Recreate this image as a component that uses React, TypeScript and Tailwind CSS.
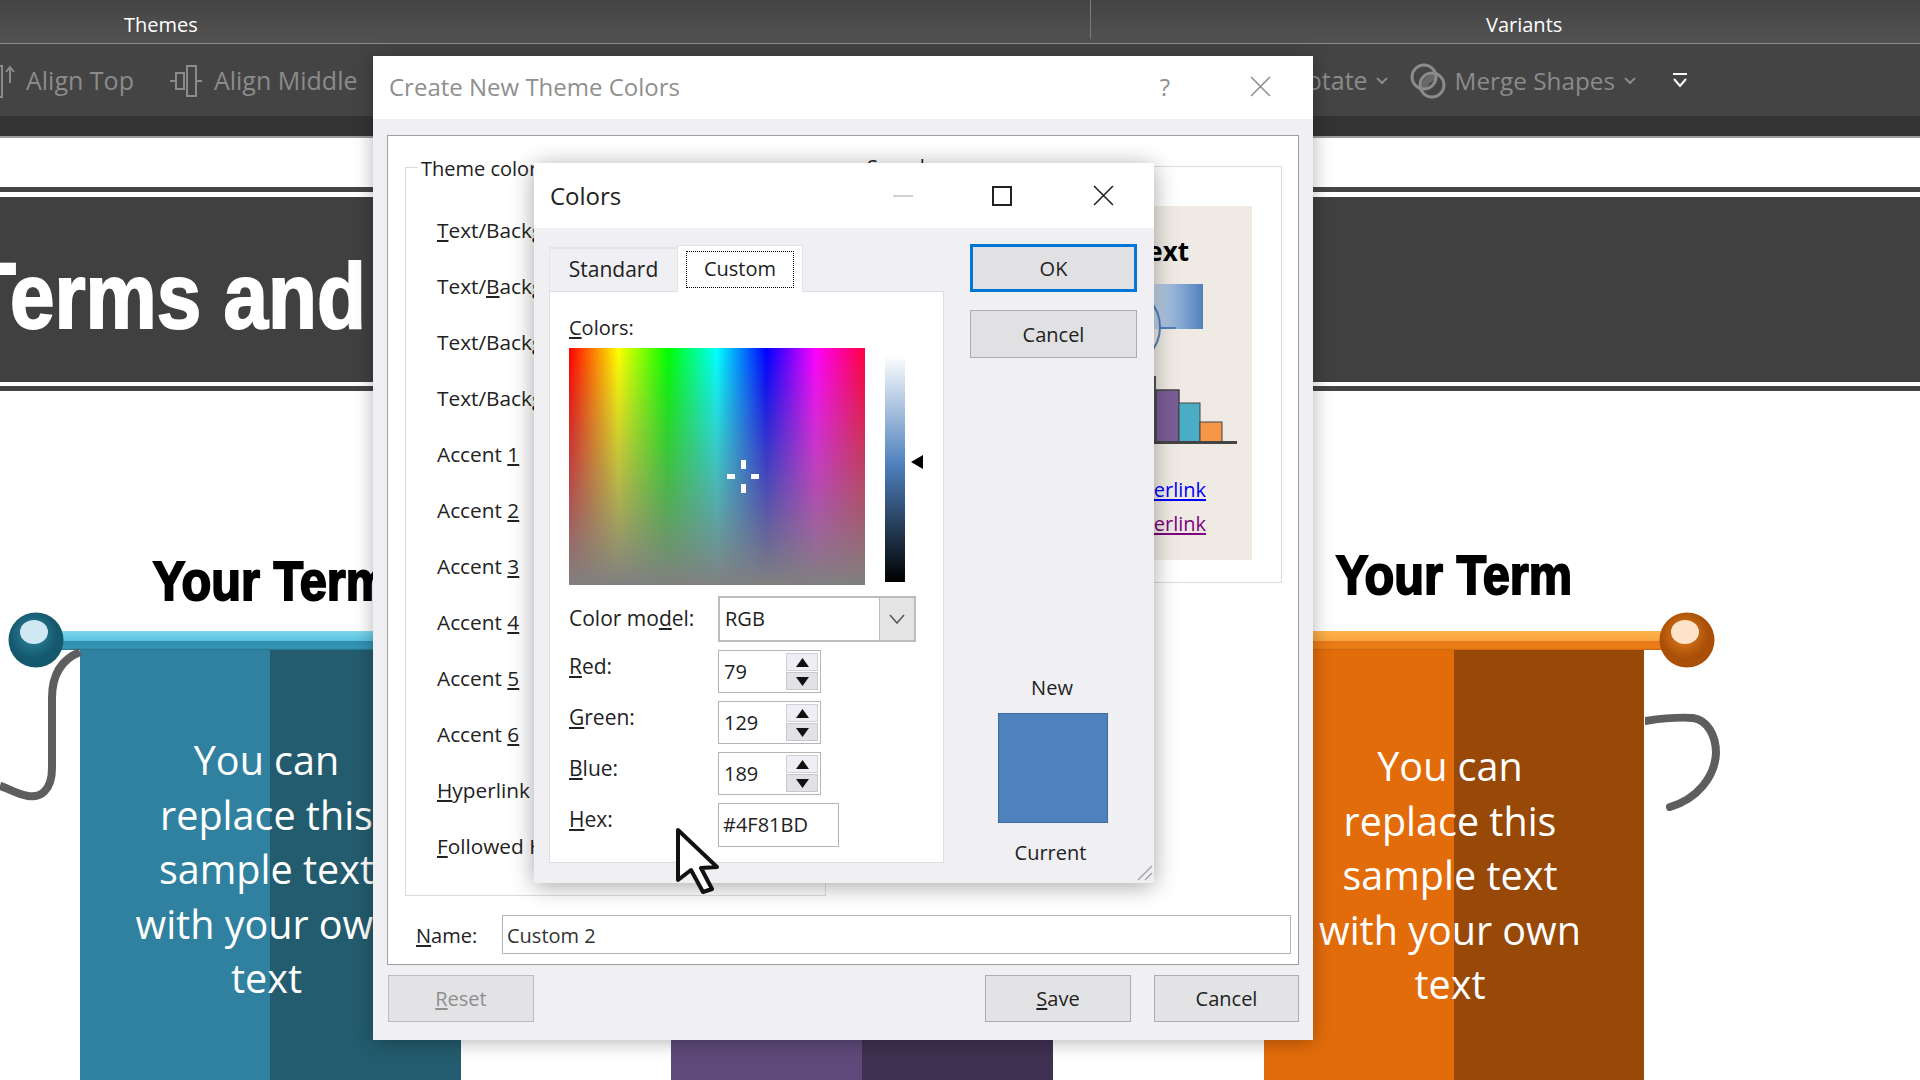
import type { ReactNode } from "react";

const themeRows: ReactNode[] = [
  <><u>T</u>ext/Background - Dark 1</>,
  <>Text/<u>B</u>ackground - Light 1</>,
  <>Text/Background - <u>D</u>ark 2</>,
  <>Text/Background - <u>L</u>ight 2</>,
  <>Accent <u>1</u></>,
  <>Accent <u>2</u></>,
  <>Accent <u>3</u></>,
  <>Accent <u>4</u></>,
  <>Accent <u>5</u></>,
  <>Accent <u>6</u></>,
  <><u>H</u>yperlink</>,
  <><u>F</u>ollowed Hyperlink</>,
];

const spinRows: { label: ReactNode; value: string }[] = [
  { label: <><u>R</u>ed:</>, value: "79" },
  { label: <><u>G</u>reen:</>, value: "129" },
  { label: <><u>B</u>lue:</>, value: "189" },
];

function CloseIcon({ className }: { className: string }) {
  return (
    <svg viewBox="0 0 20 20" className={className} fill="none" stroke="currentColor" strokeWidth="1.5">
      <path d="M1 1 19 19M19 1 1 19" />
    </svg>
  );
}

function Triangle({ up }: { up: boolean }) {
  return (
    <svg viewBox="0 0 13 9" className="h-[9px] w-[13px]" fill="#111">
      <path d={up ? "M6.5 0 13 9H0Z" : "M0 0H13L6.5 9Z"} />
    </svg>
  );
}

function Ball({ id, dark, mid, light }: { id: string; dark: string; mid: string; light: string }) {
  return (
    <svg viewBox="0 0 56 56" className="h-[56px] w-[56px]">
      <defs>
        <radialGradient id={id} cx="45%" cy="40%" r="62%">
          <stop offset="0%" stopColor={mid} />
          <stop offset="70%" stopColor={dark} />
          <stop offset="100%" stopColor={dark} />
        </radialGradient>
      </defs>
      <circle cx="28" cy="28" r="27.5" fill={`url(#${id})`} />
      <ellipse cx="26" cy="20" rx="14" ry="12" fill={light} />
    </svg>
  );
}

function Banner({
  heading,
  headingPad,
  textPad,
  fill,
  children,
  width,
}: {
  heading?: string;
  headingPad: string;
  textPad: string;
  fill: string;
  children?: ReactNode;
  width: string;
}) {
  return (
    <div className={`relative shrink-0 ${width}`}>
      <div className={`flex h-[240px] items-end justify-center ${headingPad}`}>
        {heading && (
          <h2 className="scale-x-[0.87] whitespace-nowrap font-['Liberation_Sans',sans-serif] text-[56px] leading-[56px] font-bold text-black [-webkit-text-stroke:2px_#000]">
            {heading}
          </h2>
        )}
      </div>
      <div className="h-[19px]" />
      <div className={`h-[431px] pr-[8px] text-center font-['Open_Sans',sans-serif] text-[39.5px] leading-[54.5px] whitespace-nowrap text-white ${fill} ${textPad}`}>
        {children}
      </div>
    </div>
  );
}

function Ribbon() {
  return (
    <div className="text-[#8b8b8b]">
      <div className="flex h-[44px] border-b border-[#8a8a8a] bg-[linear-gradient(to_bottom,#444444,#525252)] text-[20px] text-white">
        <div className="flex h-[39px] w-[1091px] items-center border-r border-[#7c7c7c] pt-[10px] pl-[124px]">Themes</div>
        <div className="flex h-[39px] items-center pt-[10px] pl-[395px]">Variants</div>
      </div>
      <div className="flex h-[72px] items-center bg-[#444444] pt-[2px] text-[25px]">
        <svg viewBox="0 0 20 36" className="ml-[-4px] h-[36px] w-[20px]" fill="none" stroke="#8b8b8b" strokeWidth="2">
          <path d="M0 3H6V34H0" />
          <path d="M14 20V4M10 9l4-5 4 5" />
        </svg>
        <span className="ml-[10px] whitespace-nowrap">Align Top</span>
        <svg viewBox="0 0 32 36" className="ml-[36px] h-[36px] w-[32px]" fill="none" stroke="#8b8b8b" strokeWidth="2">
          <path d="M0 18H6M26 18H32" />
          <rect x="6" y="10" width="8" height="16" />
          <rect x="17" y="3" width="9" height="30" />
        </svg>
        <span className="ml-[12px] whitespace-nowrap">Align Middle</span>
        <div className="ml-auto flex items-center pr-[232px]">
          <span className="whitespace-nowrap">Rotate</span>
          <svg viewBox="0 0 12 8" className="ml-[8px] h-[8px] w-[12px]" fill="none" stroke="#8b8b8b" strokeWidth="2">
            <path d="M1 1l5 5 5-5" />
          </svg>
          <svg viewBox="0 0 36 36" className="ml-[22px] h-[38px] w-[36px]" fill="none" stroke="#8b8b8b" strokeWidth="3">
            <circle cx="14" cy="14" r="12" />
            <circle cx="22" cy="22" r="12" />
            <path d="M14 26a12 12 0 0 1 12-12" strokeWidth="7" opacity="0.5" />
          </svg>
          <span className="ml-[9px] text-[24.3px] whitespace-nowrap">Merge Shapes</span>
          <svg viewBox="0 0 12 8" className="ml-[9px] h-[8px] w-[12px]" fill="none" stroke="#8b8b8b" strokeWidth="2">
            <path d="M1 1l5 5 5-5" />
          </svg>
          <svg viewBox="0 0 16 16" className="ml-[36px] h-[16px] w-[16px]" fill="none" stroke="#ffffff" strokeWidth="2">
            <path d="M1 1H15M2 6l6 7 6-7" />
          </svg>
        </div>
      </div>
    </div>
  );
}

function Slide() {
  return (
    <>
      <div className="box-content h-[20px] border-b-[2px] border-[#9c9c9c] bg-[#333333]" />
      <div className="h-[49px] bg-white" />
      <div className="h-[5px] bg-[#444444]" />
      <div className="h-[5px] bg-white" />
      <div className="flex h-[185px] items-center overflow-hidden bg-[#404040] pt-[12px]">
        <span className="ml-[-33px] origin-left scale-x-[0.87] whitespace-nowrap font-['Liberation_Sans',sans-serif] text-[92px] leading-none font-bold text-white [-webkit-text-stroke:2px_#fff]">
          Terms and
        </span>
      </div>
      <div className="h-[4px] bg-white" />
      <div className="h-[5px] bg-[#444444]" />
      <div className="relative flex h-[690px] overflow-hidden bg-white pl-[80px]">
        <Banner
          width="w-[381px]"
          heading="Your Term"
          headingPad="pb-[22px]"
          textPad="pt-[83px]"
          fill="bg-[linear-gradient(to_right,#30819f_50%,#235c6e_50%)]"
        >
          You can
          <br />
          replace this
          <br />
          sample text
          <br />
          with your own
          <br />
          text
        </Banner>
        <Banner
          width="ml-[210px] w-[382px]"
          headingPad=""
          textPad=""
          fill="bg-[linear-gradient(to_right,#5f497a_50%,#3f3151_50%)]"
        />
        <Banner
          width="ml-[211px] w-[380px]"
          heading="Your Term"
          headingPad="pb-[28px]"
          textPad="pt-[89px]"
          fill="bg-[linear-gradient(to_right,#e36c0a_50%,#984807_50%)]"
        >
          You can
          <br />
          replace this
          <br />
          sample text
          <br />
          with your own
          <br />
          text
        </Banner>

        {/* rods, balls and the loose wires hang over the banners */}
        <div className="absolute top-[240px] left-[60px] h-[19px] w-[401px] bg-[linear-gradient(to_bottom,#7fd6ee,#5cc3e0_50%,#2f8fb0_55%,#3495b4_90%,#27708a)]" />
        <div className="absolute top-[240px] left-[1264px] h-[19px] w-[420px] bg-[linear-gradient(to_bottom,#ffb24f,#f9a53e_50%,#e8791a_55%,#ec7d18_90%,#c9620d)]" />
        <div className="absolute top-[221px] left-[8px]">
          <Ball id="ball-teal" dark="#14586d" mid="#2f8ba6" light="#cfe8f3" />
        </div>
        <div className="absolute top-[221px] left-[1659px]">
          <Ball id="ball-orange" dark="#a94f08" mid="#e5801f" light="#fde3c9" />
        </div>
        <svg viewBox="0 0 90 160" className="absolute top-[255px] left-0 h-[160px] w-[90px]" fill="none" stroke="#5e5e60" strokeWidth="8">
          <path d="M80 6C60 14 52 30 52 52V122C52 145 40 152 28 150 16 148 8 142 0 140" />
        </svg>
        <svg viewBox="0 0 80 110" className="absolute top-[320px] left-[1645px] h-[110px] w-[80px]" fill="none" stroke="#5e5e60" strokeWidth="8" strokeLinecap="round">
          <path d="M0 10C20 7 36 6 48 7 62 9 71 24 71 42 70 66 52 88 25 96" />
        </svg>
      </div>
    </>
  );
}

function ThemeDialog() {
  return (
    <div className="absolute top-[56px] left-[373px] flex h-[984px] w-[940px] flex-col bg-[#f0eff4] text-[20px] text-[#222222] shadow-[0_2px_18px_rgba(0,0,0,0.3)]">
      <div className="flex h-[63px] items-center bg-white pb-[2px] pl-[16px] text-[#8f8f8f]">
        <span className="text-[24px]">Create New Theme Colors</span>
        <span className="ml-auto text-[24px]">?</span>
        <CloseIcon className="mr-[42px] ml-[80px] h-[21px] w-[21px]" />
      </div>
      <div className="mx-[14px] mt-[16px] flex h-[830px] flex-col border border-[#9e9e9e] bg-white">
        <div className="flex items-start pt-[31px] pl-[17px]">
          <div className="h-[729px] w-[421px] border border-[#dcdcdc]">
            <div className="-mt-[12px] ml-[12px] w-[160px] bg-white pl-[3px] leading-[26px] whitespace-nowrap">Theme colors:</div>
            <div className="mt-[21px] flex flex-col pl-[31px] text-[20.8px]">
              {themeRows.map((row, i) => (
                <div key={i} className="flex h-[56px] items-center whitespace-nowrap">
                  <span>{row}</span>
                </div>
              ))}
            </div>
          </div>
          <div className="-mt-px ml-[19px] h-[417px] w-[437px] border border-[#dcdcdc]">
            <div className="-mt-[13px] ml-[21px] w-fit bg-white leading-[26px]">Sample</div>
            <div className="mt-[26px] ml-[30px] flex h-[354px] w-[376px] flex-col items-end bg-[#efebe4]">
              <div className="mt-[29px] mr-[63px] h-[32px] text-[26px] leading-[32px] font-bold text-black">Text</div>
              <svg viewBox="1051 280 200 170" className="mt-[13px] h-[170px] w-[200px]">
                <defs>
                  <linearGradient id="sample-fill">
                    <stop offset="0%" stopColor="#ffffff" />
                    <stop offset="100%" stopColor="#4f81bd" />
                  </linearGradient>
                </defs>
                <rect x="1130" y="284" width="72" height="45" fill="url(#sample-fill)" />
                <circle cx="1120" cy="327" r="39" fill="none" stroke="#4f81bd" strokeWidth="2" />
                <path d="M1159 328H1175" stroke="#4f81bd" strokeWidth="2" />
                <path d="M1154 376V442" stroke="#555" strokeWidth="2" />
                <rect x="1155" y="390" width="23" height="52" fill="#7a5c97" stroke="#444" strokeWidth="1.5" />
                <rect x="1178" y="403" width="21" height="39" fill="#4bacc6" stroke="#444" strokeWidth="1" />
                <rect x="1199" y="422" width="22" height="20" fill="#f79646" stroke="#444" strokeWidth="1" />
                <path d="M1100 442.5H1236" stroke="#444" strokeWidth="3" />
              </svg>
              <div className="mt-[23px] mr-[46px] leading-[34px] text-[#0000ff] underline">Hyperlink</div>
              <div className="mr-[46px] leading-[34px] text-[#800080] underline">Followed Hyperlink</div>
            </div>
          </div>
        </div>
        <div className="mt-[19px] flex items-center pl-[28px]">
          <span className="w-[86px] pt-[2px]"><u>N</u>ame:</span>
          <div className="flex h-[39px] w-[789px] items-center border border-[#b5b5b5] pt-[2px] pl-[4px] text-[#333333]">Custom 2</div>
        </div>
      </div>
      <div className="mt-[10px] flex items-start pl-[15px]">
        <button className="h-[47px] w-[146px] border border-[#bdbdbd] bg-[#e3e3e6] text-[#8f8f8f]"><u>R</u>eset</button>
        <button className="ml-[451px] h-[47px] w-[146px] border border-[#adadad] bg-[#e3e3e6]"><u>S</u>ave</button>
        <button className="ml-[23px] h-[47px] w-[145px] border border-[#adadad] bg-[#e3e3e6]">Cancel</button>
      </div>
    </div>
  );
}

function ColorsDialog() {
  return (
    <div className="absolute top-[163px] left-[534px] h-[720px] w-[620px] bg-[#f0eff4] text-[20px] text-[#222222] shadow-[0_3px_22px_rgba(0,0,0,0.35)]">
      <div className="flex h-[65px] items-center bg-white pl-[16px]">
        <span className="text-[24px]">Colors</span>
        <div className="ml-[272px] h-[2px] w-[20px] bg-[#cfcfcf]" />
        <div className="ml-[79px] h-[20px] w-[20px] border-2 border-[#222222]" />
        <CloseIcon className="ml-[81px] h-[21px] w-[21px]" />
      </div>
      <div className="flex">
        <div className="ml-[15px] w-[395px]">
          <div className="mt-[17px] flex h-[46px] items-end">
            <div className="flex h-[44px] w-[128px] items-center justify-center border-t-2 border-l border-[#e4e4e8] text-[21px]">Standard</div>
            <div className="-mb-px flex h-[47px] w-[126px] items-center justify-center border-t border-r border-l border-[#e4e4e8] bg-white">
              <span className="flex h-[37px] w-[108px] items-center justify-center border border-dotted border-black">Custom</span>
            </div>
          </div>
          <div className="h-[572px] border border-[#dedee2] bg-white pl-[19px]">
            <div className="mt-[24px] h-[32px] leading-[24px]"><u>C</u>olors:</div>
            <div className="flex items-start">
              <div className="relative h-[237px] w-[296px] bg-[linear-gradient(to_bottom,transparent,#808080),linear-gradient(to_right,#ff0000,#ffff00,#00ff00,#00ffff,#0000ff,#ff00ff,#ff0040)]">
                <div className="absolute top-[126px] left-[158px] h-[5px] w-[8px] bg-white" />
                <div className="absolute top-[126px] left-[182px] h-[5px] w-[8px] bg-white" />
                <div className="absolute top-[112px] left-[172px] h-[9px] w-[5px] bg-white" />
                <div className="absolute top-[136px] left-[172px] h-[9px] w-[5px] bg-white" />
              </div>
              <div className="mt-[7px] ml-[20px] h-[227px] w-[20px] bg-[linear-gradient(to_bottom,#ffffff,#4f81bd_48%,#000000)]" />
              <svg viewBox="0 0 12 14" className="mt-[107px] ml-[6px] h-[14px] w-[12px]" fill="#000">
                <path d="M0 7 12 0V14Z" />
              </svg>
            </div>
            <div className="mt-[11px] flex h-[46px] items-center">
              <span className="w-[149px] text-[21px]">Color mo<u>d</u>el:</span>
              <div className="flex h-[46px] w-[198px] border-2 border-[#bcbcbc]">
                <span className="flex-1 self-center pl-[5px]">RGB</span>
                <div className="flex w-[35px] items-center justify-center border-l border-[#bcbcbc] bg-[#e4e4e4]">
                  <svg viewBox="0 0 16 10" className="h-[10px] w-[16px]" fill="none" stroke="#555" strokeWidth="1.5">
                    <path d="M1 1l7 8 7-8" />
                  </svg>
                </div>
              </div>
            </div>
            <div className="mt-[8px] flex flex-col gap-[8px]">
              {spinRows.map((row) => (
                <div key={row.value} className="flex items-start">
                  <span className="w-[149px] text-[21px] leading-[32px]">{row.label}</span>
                  <div className="flex h-[43px] w-[103px] items-center border border-[#b5b5b5] pl-[5px]">
                    <span className="flex-1">{row.value}</span>
                    <div className="mr-[2px] flex h-[37px] w-[32px] flex-col gap-px">
                      <div className="flex flex-1 items-center justify-center border border-[#d0d0d8] bg-[#eeeef4]">
                        <Triangle up />
                      </div>
                      <div className="flex flex-1 items-center justify-center border border-[#c8c8cc] bg-[#e2e2e6]">
                        <Triangle up={false} />
                      </div>
                    </div>
                  </div>
                </div>
              ))}
              <div className="flex items-start">
                <span className="w-[149px] text-[21px] leading-[32px]"><u>H</u>ex:</span>
                <div className="flex h-[44px] w-[121px] items-center border border-[#b5b5b5] pl-[4px]">#4F81BD</div>
              </div>
            </div>
          </div>
        </div>
        <div className="mt-[16px] ml-[26px] w-[167px]">
          <button className="h-[48px] w-full border-[3px] border-[#0078d7] bg-[#e1e1e4] pt-[2px]">OK</button>
          <button className="mt-[18px] h-[48px] w-full border border-[#adadad] bg-[#e1e1e4] pt-[2px]">Cancel</button>
          <div className="mt-[315px] pr-[3px] text-center leading-[30px]">New</div>
          <div className="mt-[10px] ml-[28px] h-[110px] w-[110px] border border-[#3f6a9e] bg-[#4f81bd]" />
          <div className="mt-[15px] pr-[6px] text-center leading-[30px]">Current</div>
        </div>
      </div>
      <svg viewBox="0 0 16 16" className="absolute right-[1px] bottom-[2px] h-[16px] w-[16px]" fill="none" stroke="#a8a8a8" strokeWidth="1.5">
        <path d="M1 15 15 1M8 15l7-7" />
      </svg>
    </div>
  );
}

export default function App() {
  return (
    <div className="relative h-[1080px] w-[1920px] overflow-hidden bg-white font-['Open_Sans','Noto_Sans',sans-serif] underline-offset-2">
      <Ribbon />
      <Slide />
      <ThemeDialog />
      <ColorsDialog />
      {/* mouse pointer */}
      <svg viewBox="0 0 44 68" className="absolute top-[827px] left-[675px] h-[68px] w-[44px]" fill="#ffffff" stroke="#111111" strokeWidth="4" strokeLinejoin="round">
        <path d="M3 3V53L16 43 28 65 37 62 26 41 42 40Z" />
      </svg>
    </div>
  );
}
